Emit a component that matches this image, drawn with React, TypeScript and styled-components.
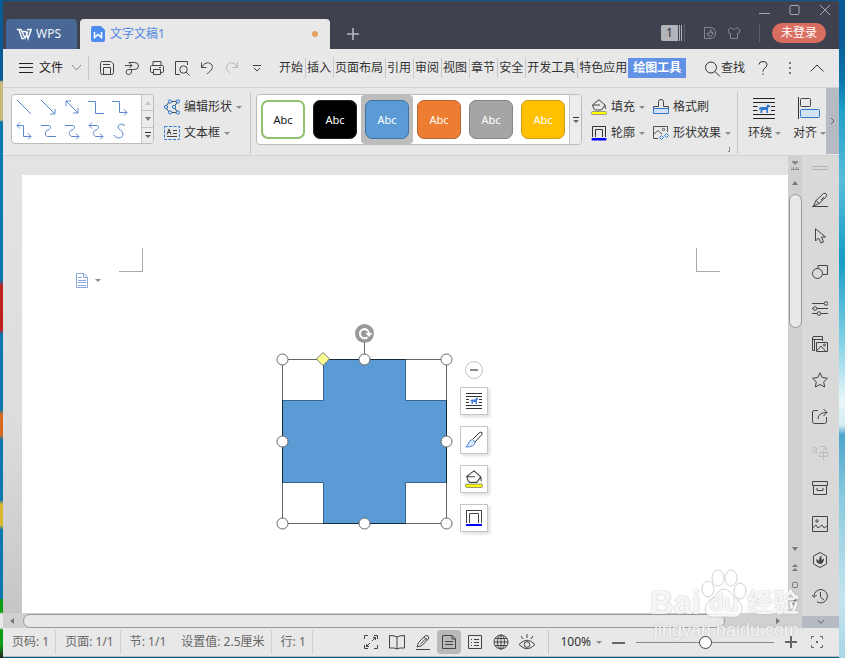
import React from 'react';
import styled, { createGlobalStyle, css } from 'styled-components';

const Global = createGlobalStyle`
  * { box-sizing: border-box; }
  html, body, #root { height: 100%; }
  body { margin: 0; overflow: hidden; }
  button { border: 0; padding: 0; background: none; font: inherit; color: inherit; cursor: pointer; }
`;

const Desktop = styled.div`
  height: 100vh;
  padding: 1px 6px 1px 3px;
  display: flex;
  font: 12px/16px 'Noto Sans', 'Noto Sans CJK SC', sans-serif;
  color: #333;
  background:
    linear-gradient(#0a5a96 0 40px, #0b76b0 80px, #1f9fc9 110px, #58bcdc 180px, #169cc6 260px, #7fd0e6 340px, #e8f6fa 400px, #d6edf5 425px, #4ba6cc 435px, #8ccbe0 500px, #c4e4ee 600px, #a8d6e6) right / 6px 100% no-repeat,
    linear-gradient(#0a5a96 0 80px, #c8b878 82px 120px, #0878ae 122px 280px, #c02020 286px 330px, #0a78ae 334px 410px, #d86a20 414px 435px, #0a78ae 440px 500px, #d8b830 504px 525px, #0a78ae 530px 598px, #0c9c14 600px 612px, #e8e8e8 614px 628px, #0c9c14 630px 645px, #222) left / 3px 100% no-repeat,
    #0a5a90;
`;
const Win = styled.div`
  flex: 1;
  min-width: 0;
  display: flex;
  flex-direction: column;
  background: #e8e8e8;
`;
const Spacer = styled.i<{ $w: number }>`
  flex: none;
  width: ${p => p.$w}px;
  height: ${p => p.$w}px;
`;

/* ---------- icons ---------- */
const Svg = styled.svg`
  display: block;
  flex: none;
  fill: none;
  stroke: currentColor;
  stroke-width: 1;
`;
type IconProps = { w?: number; h?: number; box?: string; children: React.ReactNode };
const Icon = ({ w = 16, h, box, children }: IconProps) => (
  <Svg width={w} height={h ?? w} viewBox={box ?? `0 0 ${w} ${h ?? w}`} aria-hidden="true">{children}</Svg>
);
const Caret = styled.span`
  flex: none;
  border: 3px solid transparent;
  border-top: 3px solid #8c8c8c;
  border-bottom: 0;
`;
const Arrow = ({ d }: { d: string }) => <Icon w={8}><path d={d} fill="#777" stroke="none" /></Icon>;
const UP = 'M1 6L4 2L7 6Z';
const DOWN = 'M1 2L4 6L7 2Z';
const LEFT = 'M6 1L2 4L6 7Z';
const RIGHT = 'M2 1L6 4L2 7Z';

const WrapGlyph = () => (
  <>
    <path d="M0 1.500H22M0 5.500H22M0 17.500H22M0 21.500H22M0 9.500H4.500M0 13.500H4.500M18 9.500H22M18 13.500H22" stroke="#222" />
    <path d="M6 11L8 10H13L14.500 7.500L17 8.500V10H15.500L15 12V16H13.500V13H9.500L9 16H7.500V12L6 13Z" fill="#2d78d0" stroke="none" />
  </>
);
const BucketGlyph = () => (
  <>
    <path d="M3 10L1.500 6L5 3L8 .8L14 6L10.500 11H4.500Z M1.500 6H9M14 6L14.500 10" stroke="#444" />
    <rect x=".5" y="12.500" width="15" height="3" rx="1" fill="#ff0" stroke="#777" strokeWidth=".7" />
  </>
);
const OutlineGlyph = () => (
  <>
    <path d="M1.500 12V1.500H14.500V12M4.500 12V4.500H11.500V12" stroke="#333" />
    <rect x=".5" y="13" width="15" height="2.500" rx="1" fill="#00f" stroke="none" />
  </>
);

/* ---------- title bar ---------- */
const TitleBar = styled.header`
  flex: none;
  height: 48px;
  background: #3f424e;
  color: #a5a8b0;
  display: flex;
  align-items: flex-end;
  padding-left: 3px;
`;
const HomeTab = styled.button`
  width: 71px;
  height: 30px;
  margin-right: 3px;
  padding-left: 10px;
  display: flex;
  align-items: center;
  gap: 4px;
  background: #486797;
  color: #f2f5fa;
  border-radius: 4px 4px 0 0;
`;
const DocTab = styled.div`
  width: 250px;
  height: 30px;
  padding: 0 12px 0 11px;
  display: flex;
  align-items: center;
  gap: 5px;
  background: #e8e8e8;
  color: #5089e0;
  border-radius: 4px 4px 0 0;
`;
const Unsaved = styled.span`
  width: 6px;
  height: 6px;
  margin-left: auto;
  border-radius: 50%;
  background: #e8a05c;
`;
const AddTab = styled.button`
  padding: 9px 17px;
  color: #b5b7be;
`;
const TitleRight = styled.div`
  align-self: stretch;
  margin-left: auto;
  display: flex;
  flex-direction: column;
  align-items: flex-end;
`;
const WindowButtons = styled.div`
  display: flex;
  gap: 19px;
  padding: 3px 8px 0 0;
  button { height: 12px; }
`;
const Account = styled.div`
  display: flex;
  align-items: center;
  height: 20px;
  margin-top: 7px;
  padding-right: 13px;
`;
const Count = styled.button`
  display: flex;
  gap: 1px;
  margin-right: 2px;
  span { width: 17px; height: 16px; background: #b2b4ba; color: #30333c; border-radius: 2px 0 0 2px; }
  i { width: 1px; height: 16px; background: #b2b4ba; }
`;
const DarkRule = styled.i`
  width: 1px;
  height: 18px;
  background: #5c5f69;
`;
const Login = styled.button`
  width: 54px;
  height: 20px;
  margin-left: 12px;
  border-radius: 10px;
  background: #d96d60;
  color: #fff;
`;
const AccountIcons = styled.div`
  display: flex;
  gap: 10px;
  margin: 0 18px;
  color: #858891;
`;

/* ---------- menu bar ---------- */
const MenuBar = styled.nav`
  flex: none;
  height: 38px;
  display: flex;
  align-items: center;
`;
const FileButton = styled.button`
  display: flex;
  align-items: center;
  gap: 6px;
  padding: 0 3px 0 16px;
  color: #222;
`;
const Rule = styled.i<{ $h: number }>`
  flex: none;
  width: 1px;
  height: ${p => p.$h}px;
  background: #c8c8c8;
`;
const QuickTools = styled.div`
  display: flex;
  margin: 0 9px 0 5px;
`;
const QuickButton = styled.button<{ $dim?: boolean }>`
  width: 25px;
  height: 24px;
  display: grid;
  place-items: center;
  color: ${p => (p.$dim ? '#b5b5b5' : '#444')};
`;
const Tab = styled.button<{ $active?: boolean; $last?: boolean }>`
  flex: none;
  height: 20px;
  line-height: 20px;
  padding: 0 ${p => (p.$last ? 1 : 2)}px 0 1px;
  border-right: ${p => (p.$last ? 0 : 1)}px solid #c8c8c8;
  ${p => p.$active && css`
    padding: 0 5px;
    border: 0;
    background: #6192e6;
    color: #fff;
    font-weight: 700;
  `}
`;
const MenuRight = styled.div`
  margin-left: auto;
  padding-right: 15px;
  display: flex;
  align-items: center;
  gap: 13px;
`;
const FindButton = styled.button`
  display: flex;
  align-items: center;
`;

/* ---------- ribbon ---------- */
const Ribbon = styled.section`
  flex: none;
  height: 69px;
  display: flex;
  align-items: flex-start;
  border-top: 1px solid #d2d2d2;
  border-bottom: 1px solid #d2d2d2;
  overflow: hidden;
`;
const Gallery = styled.div`
  flex: none;
  display: flex;
  margin-top: 6px;
  background: #fff;
  border: 1px solid #bcbcbc;
  border-radius: 4px;
  overflow: hidden;
`;
const Connectors = styled.div`
  display: grid;
  grid-template-columns: repeat(5, 24px);
  padding: 0 9px 0 0;
  color: #5b87cf;
  button { height: 24px; display: grid; place-items: center; }
`;
const Spinner = styled.div`
  width: 12px;
  display: flex;
  flex-direction: column;
  border-left: 1px solid #c4c4c4;
  background: #ececec;
  button { flex: 1; display: grid; place-items: center; }
  button + button { border-top: 1px solid #c4c4c4; }
`;
const Stack = styled.div`
  flex: none;
  display: flex;
  flex-direction: column;
  gap: 10px;
  padding-top: 11px;
`;
const Tool = styled.button`
  display: flex;
  align-items: center;
  gap: 4px;
  height: 16px;
`;
const Swatches = styled.div`
  display: flex;
  height: 49px;
`;
const Swatch = styled.button<{ $fill: string; $line: string; $dark?: boolean; $on?: boolean }>`
  width: 52px;
  padding: 5px 4px;
  border-radius: 4px;
  background: ${p => (p.$on ? '#bdbdbd' : 'transparent')};
  font-size: 11px;
  color: ${p => (p.$dark ? '#111' : '#fff')};
  span {
    display: grid;
    place-items: center;
    height: 39px;
    border-radius: 7px;
    border: ${p => (p.$dark ? 2 : 1)}px solid ${p => p.$line};
    background: ${p => p.$fill};
  }
`;
const BigTool = styled.button`
  flex: none;
  display: flex;
  flex-direction: column;
  gap: 6px;
  padding-top: 9px;
  > svg { margin-left: 5px; }
`;
const Label = styled.span`
  display: flex;
  align-items: center;
  gap: 3px;
`;
const Launcher = styled.button`
  align-self: flex-end;
  margin: 0 7px 3px -3px;
  width: 5px;
  height: 5px;
  border: solid #888;
  border-width: 0 1px 1px 0;
`;
const RibbonMore = styled.button`
  flex: none;
  width: 13px;
  height: 66px;
  margin-left: auto;
  display: grid;
  place-items: center;
  background: #b6bac3;
  color: #666;
`;
const RibbonBody = styled.div`
  flex: 1;
  min-width: 0;
  display: flex;
  align-items: stretch;
  overflow: hidden;
  height: 67px;
  > ${Gallery} { align-self: flex-start; }
  > ${Rule} { margin-top: 4px; }
`;

/* ---------- work area ---------- */
const Work = styled.main`
  flex: 1;
  min-height: 0;
  display: flex;
`;
const Editor = styled.div`
  flex: 1;
  min-width: 0;
  display: flex;
  flex-direction: column;
`;
const View = styled.div`
  flex: 1;
  min-height: 0;
  display: flex;
`;
const Backdrop = styled.div`
  flex: 1;
  min-width: 0;
  padding: 19px 0 0 19px;
  display: flex;
  background: linear-gradient(#e3e3e3, #dcdcdc 60%, #c6c6c6);
`;
const Paper = styled.div`
  position: relative;
  flex: 1;
  background: #fff;
  overflow: hidden;
`;
const Crop = styled.i<{ $right?: boolean }>`
  position: absolute;
  top: 73px;
  width: 24px;
  height: 24px;
  border-bottom: 1px solid #aaa;
  ${p => (p.$right
    ? css`right: 68px; border-left: 1px solid #aaa;`
    : css`left: 97px; border-right: 1px solid #aaa;`)}
`;
const PasteTag = styled.button`
  position: absolute;
  left: 53px;
  top: 98px;
  display: flex;
  align-items: center;
  gap: 6px;
  color: #8ba9da;
`;
const Shape = styled.div`
  position: absolute;
  left: 248px;
  top: 145px;
`;
const FloatTools = styled.div`
  position: absolute;
  left: 438px;
  top: 186px;
  display: flex;
  flex-direction: column;
  align-items: center;
  gap: 11px;
`;
const Collapse = styled.button`
  width: 18px;
  height: 18px;
  margin-bottom: -3px;
  display: grid;
  place-items: center;
  border: 1px solid #c4c4c4;
  border-radius: 50%;
  color: #888;
`;
const FloatButton = styled.button`
  width: 28px;
  height: 28px;
  display: grid;
  place-items: center;
  background: #fff;
  border: 1px solid #c6c6c6;
  box-shadow: 2px 2px 3px #0002;
`;
const VScroll = styled.div`
  flex: none;
  width: 14px;
  display: flex;
  flex-direction: column;
  align-items: center;
  padding: 5px 0 6px;
  background: #d0d0d0;
  color: #777;
`;
const VThumb = styled.div`
  width: 13px;
  flex: 0 1 134px;
  margin: 7px 0 auto;
  border: 1px solid #999;
  border-radius: 7px;
  background: #e8e8e8;
`;
const PageNav = styled.div`
  display: flex;
  flex-direction: column;
  align-items: center;
  gap: 10px;
`;
const HScroll = styled.div`
  flex: none;
  height: 15px;
  display: flex;
  align-items: center;
  padding: 0 20px 0 5px;
  background: #d0d0d0;
`;
const HThumb = styled.div`
  flex: 1;
  height: 14px;
  margin: 0 49px 0 7px;
  border: 1px solid #999;
  border-radius: 7px;
  background: #e8e8e8;
`;
const SideBar = styled.aside`
  flex: none;
  width: 37px;
  display: flex;
  flex-direction: column;
  background: #d9d9d9;
`;
const Grip = styled.i`
  flex: none;
  width: 16px;
  height: 4px;
  margin: 10px 0 12px 10px;
  border: solid #b2b2b2;
  border-width: 1px 0;
`;
const SideButton = styled.button<{ $dim?: boolean }>`
  flex: none;
  height: 36px;
  padding-right: 2px;
  display: grid;
  place-items: center;
  color: ${p => (p.$dim ? '#bcbcbc' : '#444')};
`;
const SideMore = styled.button`
  flex: none;
  height: 12px;
  margin-top: auto;
  display: grid;
  place-items: center;
  background: #b6bac3;
  color: #666;
`;

/* ---------- status bar ---------- */
const StatusBar = styled.footer`
  flex: none;
  height: 29px;
  display: flex;
  align-items: center;
  color: #666;
  border-bottom: 1px solid #bbb;
`;
const Stat = styled.span<{ $rule?: boolean }>`
  flex: none;
  height: 24px;
  line-height: 24px;
  padding: 0 6px 0 9px;
  border-right: ${p => (p.$rule ? 1 : 0)}px solid #d2d2d2;
`;
const StatusRight = styled.div`
  flex: none;
  margin-left: auto;
  display: flex;
  align-items: center;
  padding-right: 15px;
`;
const ViewButton = styled.button<{ $on?: boolean }>`
  width: 24px;
  height: 24px;
  margin-right: 2px;
  display: grid;
  place-items: center;
  border-radius: 4px;
  color: #444;
  background: ${p => (p.$on ? '#b9b9b9' : 'transparent')};
`;
const Zoom = styled.button`
  display: flex;
  align-items: center;
  gap: 5px;
  margin: 0 10px 0 11px;
  color: #333;
`;
const ZoomRange = styled.input`
  appearance: none;
  width: 138px;
  height: 14px;
  margin: 0 11px;
  background: linear-gradient(#888, #888) center / 100% 1px no-repeat;
  &::-webkit-slider-thumb {
    appearance: none;
    width: 13px;
    height: 13px;
    border: 1px solid #444;
    border-radius: 50%;
    background: #fff;
  }
`;

/* ---------- watermark ---------- */
const Watermark = styled.div`
  position: fixed;
  right: 46px;
  bottom: 17px;
  display: flex;
  flex-direction: column;
  align-items: flex-end;
  color: #fffd;
  font-family: 'Liberation Sans', 'Noto Sans CJK SC', sans-serif;
  text-shadow: 0 0 1px #9998, 0 0 2px #9996;
  pointer-events: none;
`;
const WatermarkTop = styled.div`
  display: flex;
  align-items: flex-end;
  height: 50px;
  font-size: 33px;
  line-height: 32px;
  font-weight: 700;
`;
const WatermarkCn = styled.span`
  font-size: 26px;
`;
const WatermarkSite = styled.span`
  font-size: 18px;
  line-height: 22px;
`;
const PawWrap = styled.span`
  display: grid;
  > * { grid-area: 1 / 1; }
`;
const Du = styled.span`
  place-self: end center;
  font-size: 24px;
`;

const connectorPaths = [
  'M1 1L15 15',
  'M1 1L14 14M15 10V15H10',
  'M2 2L14 14M2 7V2H7M14 9V14H9',
  'M0 2.500H7.500V14.500H16',
  'M0 2.500H7.500V13.500H15M12 10.500L15 13.500L12 16.500',
  'M1 2.500H7.500V13.500H15M4 -.5L1 2.500L4 5.500M12 10.500L15 13.500L12 16.500',
  'M1 2.500H8C12 2 11 6 8 7C4 8 5 14 8 13.500H16',
  'M1 2.500H8C12 2 11 6 8 7C4 8 5 13 8 13.500H15M12 10.500L15 13.500L12 16.500',
  'M1 2.500H8C12 2 11 6 8 7C4 8 5 13 8 13.500H15M4 -.5L1 2.500L4 5.500M12 10.500L15 13.500L12 16.500',
  'M13 3C11 0 6 1 6 4C6 7 11 7 11 11C11 16 4 16 2 12',
];
const quick: [string, React.ReactNode, boolean?][] = [
  ['保存', <path d="M1.500 3.500Q1.500 1.500 3.500 1.500H12L14.500 4V12.500Q14.500 14.500 12.500 14.500H3.500Q1.500 14.500 1.500 12.500ZM4.500 14V7.500H11.500V14M4 4.500H11" />],
  ['输出为PDF', <path d="M4.500 2.500H10.500Q14.500 2.500 14.500 6Q14.500 9.500 10.500 9.500H7.500V12Q7.500 14.500 4.500 14.500Q2 14.500 2 12Q2 9.500 5 9.500H7.500M1 5.500H8M5.500 3L8 5.500L5.500 8" />],
  ['打印', <path d="M4 5V1.500H12V5M4 12.500H2.500Q1.500 12.500 1.500 11V6.500Q1.500 5.500 2.500 5.500H13.500Q14.500 5.500 14.500 6.500V11Q14.500 12.500 13.500 12.500H12M4.500 9.500H11.500V14.500H4.500ZM10 7.500H12" />],
  ['打印预览', <><path d="M6 14.500H1.500V1.500H13.500V5M12 12L15.500 15.500" /><circle cx="9.500" cy="9.500" r="3.700" /></>],
  ['撤销', <path d="M2.500 2.500V7.500H7.500M2.500 7.500C5 3 9 1.500 12 4C15 7 13 10 8 14" />],
  ['恢复', <path d="M13.500 2.500V7.500H8.500M13.500 7.500C11 3 7 1.500 4 4C1 7 3 11 6 13" />, true],
];
const swatches: [string, string, boolean?, boolean?][] = [
  ['#fff', '#8cc270', true],
  ['#000', '#222'],
  ['#5b9bd5', '#41719c', false, true],
  ['#ed7d31', '#b56536'],
  ['#a5a5a5', '#858585'],
  ['#ffc000', '#c99c1c'],
];
const side: [string, React.ReactNode, boolean?][] = [
  ['样式', <path d="M0 14.500H16M1.500 14L4 8.500L11.500 1.500Q13 .8 14.200 2Q15.200 3.500 14.200 4.800L7 11.500L1.500 14M4 8.500L7 11.500M9 8L12 5" />],
  ['选择', <path d="M3.500 .8V13L6.500 10L9 15L11.500 14L9.500 9H13.500Z" />],
  ['形状', <><path d="M6 5V1.500H15.500V10.500H11" /><circle cx="5.500" cy="9.500" r="5" /></>],
  ['设置', <><path d="M0 3.500H12M5 8.500H16M0 8.500H1M0 13.500H5M9 13.500H16" /><circle cx="14" cy="3.500" r="1.800" /><circle cx="3" cy="8.500" r="1.800" /><circle cx="7" cy="13.500" r="1.800" /></>],
  ['素材', <><path d="M3 14.500H.5V2Q.5 .5 2 .5H10.500V5M.5 3.500H10M2.500 14V4M4.500 6.500H15.500V15.500H4.500ZM5 14.500L9 10L14 15.500" /><circle cx="12.500" cy="9" r="1" /></>],
  ['收藏', <path d="M8 .8L10.200 5.500L15.500 6.200L11.700 9.800L12.700 15L8 12.500L3.300 15L4.300 9.800L.5 6.200L5.800 5.500Z" />],
  ['分享', <path d="M6 2.500H2.500Q.5 2.500 .5 4V13.500Q.5 15.500 2.500 15.500H12.500Q14.500 15.500 14.500 13.500V9M6 11Q6 4.500 15 4.500M11.500 1L15 4.500L11.500 8" />],
  ['翻译', <path d="M1 4Q4.500 2 4.500 5V9.500M4.500 6Q.5 6 .5 8Q2 10 4.500 8M8 2.500H13.500V6M11.500 4L13.500 6L15.500 4M7.500 8.500H15.500V12.500H7.500ZM11.500 6.500V16" />, true],
  ['归档', <path d="M.5 1.500H15.500V5.500H.5ZM1.500 5.500V14.500H14.500V5.500M5 8V10.500H11V8" />],
  ['图片', <><path d="M.5 .5H15.500V15.500H.5ZM.7 12L4 9L6 12L10 9L12 12L15 10" /><circle cx="5" cy="5" r="1.200" /></>],
  ['健康', <><path d="M8 .5L14.500 4V12L8 15.500L1.500 12V4Z" /><path d="M8 12C4 11 4 8 4.500 7L7 9C7 6 8 4 9.500 3.500V8L12 6.500C12 10 10 12 8 12Z" fill="currentColor" stroke="none" /></>],
  ['历史', <path d="M2 8A6.700 6.700 0 1 1 5 13.800M0 7L2.200 9.500L4.500 7M8.500 4V9L12 12" />],
];
const views: [string, React.ReactNode, boolean?][] = [
  ['全屏', <path d="M1.500 5V1.500H5M11 1.500H14.500V5M14.500 11V14.500H11M5 14.500H1.500V11M9 7L12.500 3.500M10 3.500H12.500V6M7 9L3.500 12.500M3.500 10V12.500H6" />],
  ['阅读', <path d="M8 3V15M8 3Q6 1.500 .5 1.500V14Q6 13.500 8 15Q10 13.500 15.500 14V1.500Q10 1.500 8 3" />],
  ['写作', <path d="M1 15.500H15M2 13L3.500 8.500L10.500 1.500Q13 .5 14 4L7 11.500L2 13M9 3L12.500 6M5.500 10L11 4.500" />],
  ['页面视图', <path d="M1.500 1.500H11L14.500 5V14.500H1.500ZM11 1.500V5H14.500M4 7.500H12M4 10.500H12" />, true],
  ['大纲', <path d="M1.500 1.500H14.500V14.500H1.500ZM4 5.500H5M7 5.500H12M4 8.500H5M7 8.500H12M4 11.500H5M7 11.500H12" />],
  ['Web版式', <><circle cx="8" cy="8" r="7" /><ellipse cx="8" cy="8" rx="3.500" ry="7" /><path d="M2 4.500H14M1 8H15M2 11.500H14M8 1V15" /></>],
  ['护眼模式', <><path d="M0 10.500Q8 2 16 10.500Q8 19 0 10.500M8 0V4M2 2L4 5M14 2L12 5" /><circle cx="8" cy="10.500" r="2.800" /></>],
];
const handles = [[282, 359], [364, 359], [446, 359], [282, 441], [446, 441], [282, 523], [364, 523], [446, 523]];

const ToolItem = ({ icon, text, caret = true }: { icon: React.ReactNode; text: string; caret?: boolean }) => (
  <Tool>{icon}<span>{text}</span>{caret && <Caret />}</Tool>
);

export default function App() {
  return (
    <>
      <Global />
      <Desktop>
        <Win>
          <TitleBar>
            <HomeTab>
              <Icon w={16} h={14}><path d="M.8 2.500H5L9 11L12 4.500M3 2.500L6 11.500H8M6 4.500H10L12 11.500L15.200 2.500H11" strokeWidth="1.500" /></Icon>
              WPS
            </HomeTab>
            <DocTab>
              <Icon w={14} h={16}>
                <path d="M2 0H10L14 4V14Q14 16 12 16H2Q0 16 0 14V2Q0 0 2 0" fill="#4e8df0" stroke="none" />
                <path d="M3.500 6V11.500L7 8.500L10.500 11.500V6" stroke="#fff" strokeWidth="1.500" />
              </Icon>
              文字文稿1
              <Unsaved />
            </DocTab>
            <AddTab aria-label="新建"><Icon w={12}><path d="M6 0V12M0 6H12" strokeWidth="1.600" /></Icon></AddTab>
            <TitleRight>
              <WindowButtons>
                <button aria-label="最小化"><Icon w={11} h={12}><path d="M0 9.500H11" /></Icon></button>
                <button aria-label="最大化"><Icon w={11} h={12}><rect x="1" y="1.500" width="9" height="9" rx="1" /></Icon></button>
                <button aria-label="关闭"><Icon w={12}><path d="M1 1L11 11M11 1L1 11" /></Icon></button>
              </WindowButtons>
              <Account>
                <Count><span>1</span><i /><i /></Count>
                <DarkRule />
                <AccountIcons>
                  <Icon w={14} h={14}><path d="M1.500 1.500H7Q12.500 1.500 12.500 7Q12.500 12.500 7 12.500H1.500ZM7 10.500Q3 9 4 7L6 8Q6 5 8 3.500V7L10 6Q10 10 7 10.500" /></Icon>
                  <Icon w={14} h={14}><path d="M4 1.500L1 4L2 7.500H3.500V12.500H10.500V7.500H12L13 4L10 1.500Q7 5 4 1.500" /></Icon>
                </AccountIcons>
                <DarkRule />
                <Login>未登录</Login>
              </Account>
            </TitleRight>
          </TitleBar>

          <MenuBar>
            <FileButton>
              <Icon w={14} h={12}><path d="M0 1.500H14M0 5.500H14M0 10.500H14" /></Icon>
              文件
              <Icon w={16} h={8}><path d="M3 1L7.500 6L12 1" stroke="#888" /></Icon>
            </FileButton>
            <Rule $h={24} />
            <QuickTools>
              {quick.map(([name, g, dim]) => <QuickButton key={name} aria-label={name} $dim={dim}><Icon>{g}</Icon></QuickButton>)}
              <QuickButton aria-label="更多"><Icon w={8}><path d="M0 1.500H8M1 4L4 7L7 4" /></Icon></QuickButton>
            </QuickTools>
            {['开始', '插入', '页面布局', '引用', '审阅', '视图', '章节', '安全', '开发工具'].map(t => <Tab key={t}>{t}</Tab>)}
            <Tab $last>特色应用</Tab>
            <Tab $active>绘图工具</Tab>
            <MenuRight>
              <FindButton><Icon w={17}><circle cx="7" cy="7.500" r="5.500" /><path d="M11 11.500L16 16.500" /></Icon>查找</FindButton>
              <button aria-label="帮助"><Icon w={10} h={16}><path d="M1 4.500Q1 1.500 5 1.500Q9 1.500 9 4.500Q9 6.500 7 8Q5 9 5 11.500M5 13.500V15" /></Icon></button>
              <button aria-label="菜单"><Icon w={16}><path d="M9 2V4M9 7V9M9 12V14" strokeWidth="2" stroke="#777" /></Icon></button>
              <button aria-label="折叠功能区"><Icon w={14} h={10}><path d="M.5 8.500L7 2L13.500 8.500" /></Icon></button>
            </MenuRight>
          </MenuBar>

          <Ribbon>
            <RibbonBody>
              <Spacer $w={8} />
              <Gallery>
                <Connectors>
                  {connectorPaths.map((d, i) => <button key={d} aria-label={`连接符 ${i + 1}`}><Icon w={18} box="-1 -1 18 18"><path d={d} /></Icon></button>)}
                </Connectors>
                <Spinner>
                  <button aria-label="上一行"><Icon w={8}><path d={UP} fill="#c4c4c4" stroke="none" /></Icon></button>
                  <button aria-label="下一行"><Arrow d={DOWN} /></button>
                  <button aria-label="全部形状"><Icon w={8}><path d="M1 1.500H7" /><path d="M1 4L4 7L7 4Z" fill="#666" stroke="none" /></Icon></button>
                </Spinner>
              </Gallery>
              <Spacer $w={10} />
              <Stack>
                <ToolItem text="编辑形状" icon={<Icon><path d="M14 2L5 3L1.500 8L5 13L14 14M14 2L10 8L14 14" stroke="#444" /><g stroke="#2d78d0" fill="#dcecff"><circle cx="6" cy="2.500" r="1.600" /><circle cx="14" cy="2.500" r="1.600" /><circle cx="2" cy="8" r="1.600" /><circle cx="10" cy="8" r="1.600" /><circle cx="6" cy="13.500" r="1.600" /><circle cx="14" cy="13.500" r="1.600" /></g></Icon>} />
                <ToolItem text="文本框" icon={<Icon><rect x=".5" y="1.500" width="15" height="13" stroke="#2d78d0" strokeDasharray="3 1.500" /><path d="M3 9.500L5 4L7 9.500M4 7.500H6M9 5.500H13M9 8.500H13M3 11.500H13" stroke="#444" /></Icon>} />
              </Stack>
              <Spacer $w={8} />
              <Rule $h={62} />
              <Spacer $w={5} />
              <Gallery>
                <Swatches>
                  {swatches.map(([fill, line, dark, on]) => <Swatch key={fill} $fill={fill} $line={line} $dark={dark} $on={on}><span>Abc</span></Swatch>)}
                </Swatches>
                <Spinner>
                  <button aria-label="全部样式"><Icon w={8}><path d="M1 1.500H7" /><path d="M1 4L4 7L7 4Z" fill="#666" stroke="none" /></Icon></button>
                </Spinner>
              </Gallery>
              <Spacer $w={9} />
              <Stack>
                <ToolItem text="填充" icon={<Icon><BucketGlyph /></Icon>} />
                <ToolItem text="轮廓" icon={<Icon><OutlineGlyph /></Icon>} />
              </Stack>
              <Spacer $w={8} />
              <Stack>
                <ToolItem text="格式刷" caret={false} icon={<Icon><path d="M.5 9.500V7.500H5.500V2.500Q5.500 .5 8 .5Q10.500 .5 10.500 2.500V7.500H15.500V9.500" stroke="#444" /><path d="M.5 9.500H15.500V14.500H.5Z" stroke="#2d78d0" fill="#d3e2f3" /></Icon>} />
                <ToolItem text="形状效果" icon={<Icon><path d="M5 13.500H.5V1.500H14.500V7M1 9L5 5.500L9 9" stroke="#555" /><circle cx="10.500" cy="4.500" r="1.200" stroke="#555" /><path d="M8.500 10.500L10.500 12.500L8.500 14.500L6.500 12.500ZM13.500 8.500L15.500 10.500L13.500 12.500L11.500 10.500Z" stroke="#2d78d0" fill="#dcecff" /></Icon>} />
              </Stack>
              <Launcher aria-label="形状设置" />
              <Rule $h={62} />
              <Spacer $w={10} />
              <BigTool><Icon w={22}><WrapGlyph /></Icon><Label>环绕<Caret /></Label></BigTool>
              <Spacer $w={12} />
              <BigTool>
                <Icon w={22}><path d="M.5 0V22" stroke="#333" /><rect x="2.500" y="1.500" width="10" height="8" rx="1" stroke="#444" /><rect x="2.500" y="12.500" width="19" height="8" rx="1" stroke="#2d78d0" fill="#d3e2f3" /></Icon>
                <Label>对齐<Caret /></Label>
              </BigTool>
            </RibbonBody>
            <RibbonMore aria-label="更多工具"><Icon w={6} h={8}><path d="M1 1L4 4L1 7" /></Icon></RibbonMore>
          </Ribbon>

          <Work>
            <Editor>
              <View>
                <Backdrop>
                  <Paper>
                    <Crop />
                    <Crop $right />
                    <PasteTag aria-label="段落布局">
                      <Icon w={14} h={15}><path d="M1.500 .5H9L12.500 4.500V14.500H1.500ZM8.500 .5V4.500H12.500M3 4.500H7M3 7.500H11M3 9.500H11M3 12.500H11" /></Icon>
                      <Caret />
                    </PasteTag>
                    <Shape>
                      <Icon w={190} h={215} box="270 320 190 215">
                        <path d="M323.500 359.500H405.500V400.500H446.500V482.500H405.500V523.500H323.500V482.500H282.500V400.500H323.500Z" fill="#5b9bd5" stroke="#34648f" />
                        <path d="M364.500 342V359M282.500 359.500H446.500V523.500H282.500Z" stroke="#000" strokeOpacity=".6" />
                        {handles.map(([x, y]) => <circle key={`${x}-${y}`} cx={x + .5} cy={y + .5} r="5.500" fill="#fff" stroke="#666" />)}
                        <path d="M323 352.500L329.500 359L323 365.500L316.500 359Z" fill="#ffff94" stroke="#777" />
                        <circle cx="364.500" cy="333.500" r="9.500" fill="#999" stroke="none" />
                        <path d="M367.500 337.200A4.600 4.600 0 1 1 369 333" stroke="#fff" strokeWidth="2" />
                        <path d="M365.500 333H372.500L369 337Z" fill="#fff" stroke="none" />
                      </Icon>
                    </Shape>
                    <FloatTools>
                      <Collapse aria-label="收起"><Icon w={10} h={2}><path d="M1 1H9" strokeWidth="2" /></Icon></Collapse>
                      <FloatButton aria-label="环绕方式">
                        <Icon w={16} h={18}>
                          <path d="M0 1.500H16M0 4.500H16M0 13.500H16M0 16.500H16M0 7.500H3M0 10.500H3M13 7.500H16M13 10.500H16" stroke="#333" />
                          <path d="M4.500 8L6 7.500H9L10.500 5.500L12 6V7.500L11 8V12H9.500V10H7V12H5.500V9L4.500 10Z" fill="#4a7fdc" stroke="none" />
                        </Icon>
                      </FloatButton>
                      <FloatButton aria-label="形状样式"><Icon w={18}><path d="M7.500 8.500L14 2Q16 .5 17 1.500Q17.500 3 16 4.500L10 11Z" stroke="#333" /><path d="M7.500 8.500L10 11Q10 16 1 16Q3 14 3.500 12Q4.500 9 7.500 8.500Z" stroke="#4a86dc" fill="#dceafa" /></Icon></FloatButton>
                      <FloatButton aria-label="填充颜色"><Icon w={18} box="0 0 16 16"><BucketGlyph /></Icon></FloatButton>
                      <FloatButton aria-label="轮廓颜色"><Icon w={16}><path d="M.5 13V.5H15.500V13M3.500 13V3.500H12.500V13" stroke="#444" /><path d="M0 15H16" stroke="#00f" strokeWidth="2" /></Icon></FloatButton>
                    </FloatTools>
                  </Paper>
                </Backdrop>
                <VScroll>
                  <Icon w={8} h={9}><path d="M1 0H7V1L4 4L1 1Z" fill="#888" stroke="none" /><path d="M0 6V8.500H8V6M2.500 6V8M5.500 6V8" stroke="#888" /></Icon>
                  <Spacer $w={9} />
                  <Arrow d={UP} />
                  <VThumb />
                  <PageNav>
                    <Arrow d={DOWN} />
                    <Icon w={8} h={9}><path d="M1 4L4 1L7 4ZM1 8L4 5L7 8Z" fill="#777" stroke="none" /></Icon>
                    <Icon w={6}><rect x=".5" y=".5" width="5" height="5" rx="1" /></Icon>
                    <Icon w={8} h={9}><path d="M1 1L4 4L7 1ZM1 5L4 8L7 5Z" fill="#777" stroke="none" /></Icon>
                  </PageNav>
                </VScroll>
              </View>
              <HScroll><Arrow d={LEFT} /><HThumb /><Arrow d={RIGHT} /></HScroll>
            </Editor>
            <SideBar>
              <Grip />
              {side.map(([name, g, dim]) => <SideButton key={name} aria-label={name} $dim={dim}><Icon>{g}</Icon></SideButton>)}
              <SideMore aria-label="更多"><Icon w={8} h={6}><path d="M1 1L4 4.500L7 1" /></Icon></SideMore>
            </SideBar>
          </Work>

          <StatusBar>
            <Stat $rule>页码: 1</Stat>
            <Stat $rule>页面: 1/1</Stat>
            <Stat>节: 1/1</Stat>
            <Stat $rule>设置值: 2.5厘米</Stat>
            <Stat $rule>行: 1</Stat>
            <StatusRight>
              {views.map(([name, g, on]) => <ViewButton key={name} aria-label={name} $on={on}><Icon>{g}</Icon></ViewButton>)}
              <Spacer $w={7} />
              <Rule $h={24} />
              <Zoom>100%<Caret /></Zoom>
              <button aria-label="缩小"><Icon w={13}><path d="M0 7H13" strokeWidth="2" /></Icon></button>
              <ZoomRange type="range" aria-label="显示比例" defaultValue={50} />
              <button aria-label="放大"><Icon w={12}><path d="M0 6H12M6 0V12" strokeWidth="2" /></Icon></button>
              <Spacer $w={13} />
              <button aria-label="最佳显示比例"><Icon w={14}><path d="M1.500 4V1.500H4M10 1.500H12.500V4M12.500 10V12.500H10M4 12.500H1.500V10" /><path d="M6 7H8" strokeWidth="2" /></Icon></button>
            </StatusRight>
          </StatusBar>
        </Win>
      </Desktop>
      <Watermark>
        <WatermarkTop>
          Bai
          <PawWrap>
            <Icon w={46} h={50}>
              <g fill="#fffc" stroke="#bbba">
                <ellipse cx="7" cy="20" rx="6" ry="8" /><ellipse cx="17" cy="9" rx="6" ry="8" /><ellipse cx="30" cy="9" rx="6" ry="8" /><ellipse cx="39" cy="22" rx="6" ry="8" />
                <path d="M23 20Q28 20 33 28Q42 34 41 41Q39 50 29 48H16Q6 50 4 41Q4 34 13 28Q18 20 23 20Z" />
              </g>
            </Icon>
            <Du>du</Du>
          </PawWrap>
          <WatermarkCn>经验</WatermarkCn>
        </WatermarkTop>
        <WatermarkSite>jingyan.baidu.com</WatermarkSite>
      </Watermark>
    </>
  );
}
